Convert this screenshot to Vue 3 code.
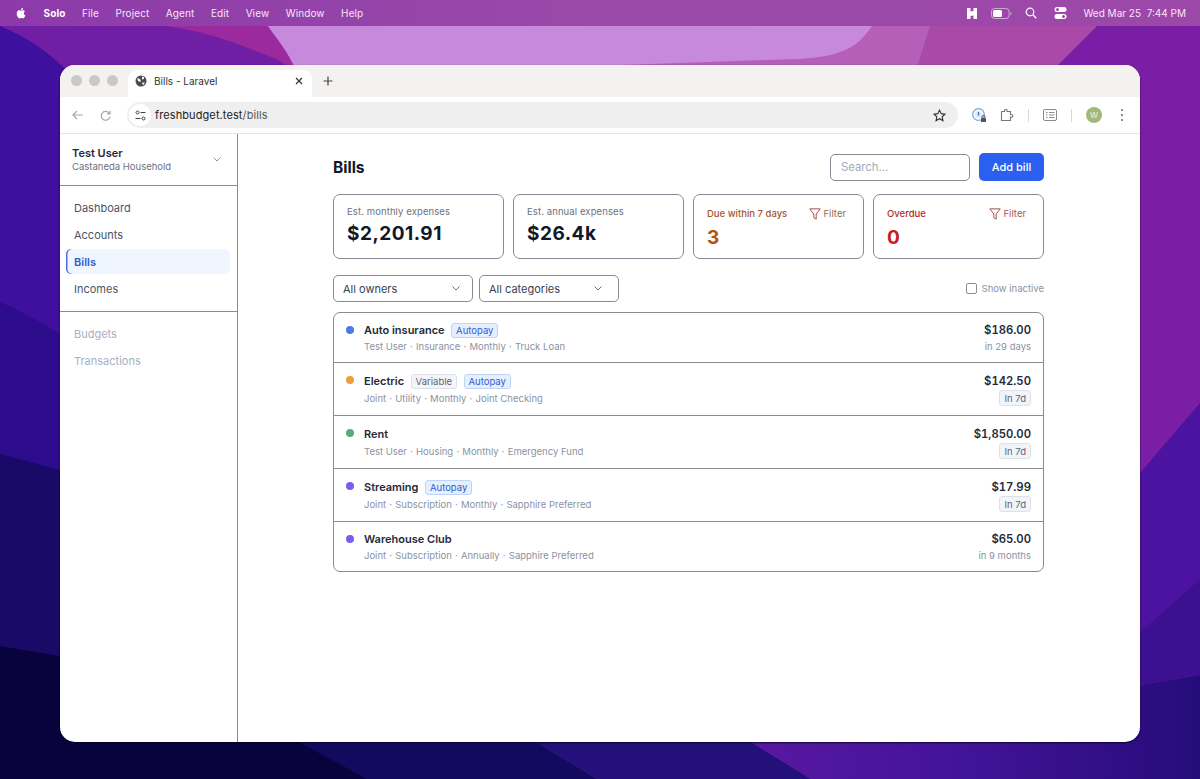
<script setup>
const stats = [
  { label: 'Est. monthly expenses', value: '$2,201.91' },
  { label: 'Est. annual expenses', value: '$26.4k' },
  { label: 'Due within 7 days', value: '3', tone: 'due', filter: true },
  { label: 'Overdue', value: '0', tone: 'over', filter: true },
]

const bills = [
  { name: 'Auto insurance', color: '#4a7be8', tags: ['Autopay'], meta: ['Test User', 'Insurance', 'Monthly', 'Truck Loan'], amount: '$186.00', when: 'in 29 days', h: 50 },
  { name: 'Electric', color: '#e9a23b', tags: ['Variable', 'Autopay'], meta: ['Joint', 'Utility', 'Monthly', 'Joint Checking'], amount: '$142.50', badge: 'In 7d', h: 53 },
  { name: 'Rent', color: '#4fae7f', tags: [], meta: ['Test User', 'Housing', 'Monthly', 'Emergency Fund'], amount: '$1,850.00', badge: 'In 7d', h: 53 },
  { name: 'Streaming', color: '#7c5ce8', tags: ['Autopay'], meta: ['Joint', 'Subscription', 'Monthly', 'Sapphire Preferred'], amount: '$17.99', badge: 'In 7d', h: 53 },
  { name: 'Warehouse Club', color: '#7c5ce8', tags: [], meta: ['Joint', 'Subscription', 'Annually', 'Sapphire Preferred'], amount: '$65.00', when: 'in 9 months', h: 49 },
]

const menus = ['File', 'Project', 'Agent', 'Edit', 'View', 'Window', 'Help']
const nav = ['Dashboard', 'Accounts', 'Bills', 'Incomes']
</script>

<template>
  <div class="desktop">
    <svg class="wallpaper" viewBox="0 0 1200 779">
      <defs>
        <linearGradient id="glow" x1="0" y1="0" x2="1" y2="0">
          <stop offset="0" stop-color="#5a18a2" />
          <stop offset="0.45" stop-color="#44149a" />
          <stop offset="1" stop-color="#260c7a" />
        </linearGradient>
      </defs>
      <rect width="1200" height="779" fill="#7a1fa5" />
      <path d="M165 26C205 34 260 45 292 70H0V26Z" fill="#701fa5" />
      <path d="M0 26C25 36 45 50 60 64L90 90V779H0Z" fill="#3f0f9e" />
      <path d="M0 302C20 310 40 322 60 334L90 350V779H0Z" fill="#2d0c8c" />
      <path d="M0 454L60 470L90 480V779H0Z" fill="#1a0a68" />
      <path d="M0 646L60 656L90 660V779H0Z" fill="#08033c" />
      <path d="M60 700H300L367 779H60Z" fill="#08033c" />
      <path d="M280 732L367 779H597L520 732Z" fill="#120a5e" />
      <path d="M520 732L597 779H811L735 732Z" fill="#24107a" />
      <path d="M735 732L811 779H1200V675L1110 690V732Z" fill="url(#glow)" />
      <path d="M1110 500L1140 473L1200 403V579L1140 632L1110 660Z" fill="#4c12a0" />
      <path d="M1110 660L1140 632L1200 579V675L1140 685L1110 690Z" fill="#3c1090" />
      <path d="M165 26C200 30 235 42 258 52C270 56 285 62 292 70H300V26Z" fill="#9c2a9f" />
      <path d="M268 26H1097L1053 70H296C288 52 278 40 268 26Z" fill="#a94aa8" />
      <path d="M268 26H930L916 70H296C288 52 278 40 268 26Z" fill="#b65fb8" />
      <path d="M268 26H872C858 46 845 56 800 59C700 62 600 66 500 70H296C288 52 278 40 268 26Z" fill="#c689dc" />
    </svg>

    <header class="menubar">
      <svg class="apple" viewBox="0 0 14 16" width="12" height="14"><path fill="#fff" d="M10.3 8.4c0-1.5 1.2-2.2 1.3-2.3-.7-1-1.8-1.2-2.2-1.2-.9-.1-1.8.6-2.3.6s-1.200-.6-2-.6C4 4.900 3 5.500 2.500 6.400 1.400 8.300 2.200 11.100 3.300 12.700c.5.800 1.200 1.600 2 1.600s1.100-.5 2-.5 1.200.5 2 .5 1.400-.8 1.900-1.600c.6-.9.900-1.800.9-1.800s-1.800-.7-1.800-2.500zM8.800 3.800c.4-.5.700-1.200.6-1.900-.6 0-1.300.4-1.800.9-.4.4-.7 1.200-.6 1.800.7.100 1.400-.3 1.800-.8z" /></svg>
      <b>Solo</b>
      <span v-for="m in menus" :key="m">{{ m }}</span>
      <div class="tray">
        <svg width="12" height="13" viewBox="0 0 12 13"><path fill="#fff" d="M1 1h3.500v3.500L7.500 4V1H11v11H7.500V8.500L4.500 9v3H1z" /></svg>
        <svg class="battery" width="21" height="11" viewBox="0 0 21 11"><rect x=".5" y=".5" width="17.500" height="10" rx="3" fill="none" stroke="#e6cfe8" stroke-opacity=".7" /><rect x="2" y="2" width="9" height="7" rx="1.500" fill="#fff" /><path d="M19.500 3.500c1 .5 1 3.500 0 4z" fill="#e6cfe8" /></svg>
        <svg width="12" height="12" viewBox="0 0 12 12"><circle cx="5" cy="5" r="3.800" fill="none" stroke="#fff" stroke-width="1.200" /><path d="M8 8l3.300 3.300" stroke="#fff" stroke-width="1.300" /></svg>
        <svg class="controls" width="13" height="12" viewBox="0 0 13 12"><rect x=".5" y="0" width="12" height="5" rx="2.500" fill="#fff" /><rect x=".5" y="7" width="12" height="5" rx="2.500" fill="#fff" /><circle cx="3.500" cy="2.500" r="1.500" fill="#9a4aa8" /><circle cx="9.500" cy="9.500" r="1.500" fill="#9a4aa8" /></svg>
        <span class="clock">Wed Mar 25&nbsp; 7:44 PM</span>
      </div>
    </header>

    <div class="window">
      <div class="tabstrip">
        <div class="lights"><i></i><i></i><i></i></div>
        <div class="tab">
          <svg width="12" height="12" viewBox="0 0 12 12"><circle cx="6" cy="6" r="5.500" fill="#4a4a4c" /><path d="M2 3l3 1 1 2-1 1-2-1zM7 1.500l2 .5 0 2-2 .5zM7 7.500l3 0-2 3z" fill="#f2f2f2" /></svg>
          <span>Bills - Laravel</span>
          <svg class="tab-x" width="8" height="8" viewBox="0 0 8 8"><path d="M1 1l6 6M7 1l-6 6" stroke="#333" stroke-width="1.200" /></svg>
        </div>
        <svg class="plus" width="10" height="10" viewBox="0 0 10 10"><path d="M5 .5v9M.5 5h9" stroke="#444" stroke-width="1.200" /></svg>
      </div>

      <div class="toolbar">
        <svg width="12" height="10" viewBox="0 0 12 10"><path d="M11 5H1.500M5 1L1 5l4 4" fill="none" stroke="#a8a8a8" stroke-width="1.200" /></svg>
        <svg width="11" height="11" viewBox="0 0 11 11"><path d="M9.600 3.800A4.400 4.400 0 1 0 10 6.500M10 .8v3.200H6.800" fill="none" stroke="#a8a8a8" stroke-width="1.200" /></svg>
        <div class="omnibox">
          <span class="site">
            <svg width="11" height="11" viewBox="0 0 11 11"><circle cx="2.500" cy="2.500" r="1.500" fill="none" stroke="#444" /><path d="M5.500 2.500H10.500M.5 8.500H5.500" stroke="#444" /><circle cx="8.500" cy="8.500" r="1.500" fill="none" stroke="#444" /></svg>
          </span>
          <span class="url">freshbudget.test<em>/bills</em></span>
          <svg class="star" width="13" height="13" viewBox="0 0 14 14"><path d="M7 1.200l1.800 3.800 4.100.5-3 2.900.8 4.100L7 10.500l-3.700 2 .8-4.100-3-2.900 4.100-.5z" fill="none" stroke="#333" stroke-width="1.200" /></svg>
        </div>
        <div class="actions">
          <svg width="14" height="15" viewBox="0 0 14 15"><circle cx="6.500" cy="6.500" r="5.800" fill="none" stroke="#7ea6dc" stroke-width="1.300" /><circle cx="6.500" cy="6.500" r="3.500" fill="#dce8f6" /><path d="M6.500 4v3.500" stroke="#3d6db5" stroke-width="1.200" /><rect x="9" y="10" width="5" height="4" rx=".5" fill="#555" /><path d="M10 10V8.800a1.500 1.500 0 0 1 3 0V10" fill="none" stroke="#555" /></svg>
          <svg width="14" height="14" viewBox="0 0 14 14"><path d="M1.500 3.500h3v-1a1.300 1.300 0 0 1 2.600 0v1h3.400v3h1a1.300 1.300 0 0 1 0 2.600h-1v3.400h-9v-3.400" fill="none" stroke="#777" stroke-width="1.100" /><path d="M1.500 9V3.500" stroke="#777" stroke-width="1.100" /></svg>
          <i class="sep"></i>
          <svg width="14" height="12" viewBox="0 0 14 12"><rect x=".5" y=".5" width="13" height="11" rx="1.500" fill="none" stroke="#8a8a8a" /><path d="M3 3.500h1.500M3 6h1.500M3 8.500h1.500M6 3.500h5.500M6 6h5.500M6 8.500h5.500" stroke="#8a8a8a" /></svg>
          <i class="sep"></i>
          <span class="avatar">W</span>
          <span class="dots"><i></i><i></i><i></i></span>
        </div>
      </div>

      <div class="app">
        <aside class="sidebar">
          <div class="account">
            <div>
              <div class="acc-name">Test User</div>
              <div class="acc-house">Castaneda Household</div>
            </div>
            <svg width="8" height="5" viewBox="0 0 8 5"><path d="M.5.500L4 4l3.500-3.500" fill="none" stroke="#8a93a3" /></svg>
          </div>
          <nav class="nav">
            <a v-for="n in nav" :key="n" :class="{ active: n === 'Bills' }">{{ n }}</a>
          </nav>
          <nav class="nav nav-off">
            <a>Budgets</a>
            <a>Transactions</a>
          </nav>
        </aside>

        <main class="main">
          <div class="head">
            <h1>Bills</h1>
            <div class="head-right">
              <div class="search">Search...</div>
              <button class="add">Add bill</button>
            </div>
          </div>

          <div class="stats">
            <div v-for="s in stats" :key="s.label" class="stat" :class="s.tone">
              <div class="stat-top">
                <span class="stat-label">{{ s.label }}</span>
                <span v-if="s.filter" class="filter">
                  <svg width="12" height="12" viewBox="0 0 11 11"><path d="M.7.800h9.600L6.600 5.500v4.700L4.400 9V5.500z" fill="none" stroke="currentColor" stroke-width=".9" stroke-linejoin="round" /></svg>
                  Filter
                </span>
              </div>
              <div class="stat-value">{{ s.value }}</div>
            </div>
          </div>

          <div class="filters">
            <div class="select own">All owners<svg width="8" height="5" viewBox="0 0 8 5"><path d="M.5.500L4 4l3.500-3.500" fill="none" stroke="#6b7280" /></svg></div>
            <div class="select cat">All categories<svg width="8" height="5" viewBox="0 0 8 5"><path d="M.5.500L4 4l3.500-3.500" fill="none" stroke="#6b7280" /></svg></div>
            <label class="inactive"><i></i>Show inactive</label>
          </div>

          <div class="list">
            <div v-for="b in bills" :key="b.name" class="row" :class="{ tall: b.badge }" :style="{ height: b.h + 'px' }">
              <span class="dot" :style="{ background: b.color }"></span>
              <div class="row-body">
                <div class="row-title">
                  <span class="row-name">{{ b.name }}</span>
                  <span v-for="t in b.tags" :key="t" class="tag" :class="t.toLowerCase()">{{ t }}</span>
                </div>
                <div class="row-meta">
                  <template v-for="(m, i) in b.meta" :key="m"><span v-if="i" class="mid">·</span>{{ m }}</template>
                </div>
              </div>
              <div class="row-end">
                <div class="amount">{{ b.amount }}</div>
                <span v-if="b.badge" class="in">{{ b.badge }}</span>
                <span v-else class="when">{{ b.when }}</span>
              </div>
            </div>
          </div>
        </main>
      </div>
    </div>
  </div>
</template>

<style>
html, body { margin: 0; background: #2a1080; }
</style>

<style scoped>
.desktop {
  position: relative;
  width: 1200px;
  height: 779px;
  overflow: hidden;
  font-family: Inter, "Liberation Sans", sans-serif;
  color: #111827;
}
.wallpaper { position: absolute; inset: 0; width: 1200px; height: 779px; }

.menubar {
  position: relative;
  height: 26px;
  display: flex;
  align-items: center;
  gap: 16.500px;
  padding: 0 14px 0 15px;
  background: linear-gradient(90deg, #8c3aaa, #9a4aa8 50%, #9c48a8);
  color: #f6e6f6;
  font-size: 10px;
  letter-spacing: .1px;
}
.menubar b { color: #fff; font-weight: 700; }
.tray { margin-left: auto; display: flex; align-items: center; gap: 13px; }
.controls { margin-left: 4px; }
.clock { margin-left: 4px; letter-spacing: 0; }

.window {
  position: relative;
  margin: 39px 0 0 60px;
  width: 1080px;
  height: 677px;
  background: #fff;
  border-radius: 15px;
  overflow: hidden;
  display: flex;
  flex-direction: column;
  box-shadow: 0 1px 2px rgba(5, 0, 30, .8);
}

.tabstrip {
  height: 32px;
  flex: none;
  background: #f3f2f1;
  display: flex;
  align-items: flex-end;
}
.lights { display: flex; gap: 7px; padding: 0 10px 11px 11px; }
.lights i { width: 11px; height: 11px; border-radius: 50%; background: #c9c9c9; }
.tab {
  width: 184px;
  height: 27px;
  background: #fff;
  border-radius: 9px 9px 0 0;
  display: flex;
  align-items: center;
  gap: 7px;
  padding: 0 9px 5px 7px;
  box-sizing: border-box;
  font-size: 10px;
  color: #333;
}
.tab-x { margin-left: auto; }
.plus { margin: 0 0 11px 11px; }

.toolbar {
  height: 37px;
  flex: none;
  box-sizing: border-box;
  border-bottom: 1px solid #e4e4e4;
  display: flex;
  align-items: center;
  padding-left: 12px;
  gap: 16px;
}
.omnibox {
  width: 831px;
  height: 26px;
  border-radius: 13px;
  background: #efefef;
  display: flex;
  align-items: center;
  flex: none;
}
.site {
  width: 22px;
  height: 22px;
  margin-left: 2px;
  border-radius: 50%;
  background: #fff;
  display: flex;
  align-items: center;
  justify-content: center;
}
.url { margin-left: 4px; font-size: 11px; color: #222; letter-spacing: .1px; }
.url em { font-style: normal; color: #555; }
.star { margin-left: auto; margin-right: 12px; }
.actions { display: flex; align-items: center; gap: 14px; margin-left: -2px; }
.sep { width: 1px; height: 13px; background: #d8d8d8; }
.avatar {
  width: 16px;
  height: 16px;
  border-radius: 50%;
  background: #a3b97a;
  color: #f1f5e8;
  font-size: 8px;
  display: flex;
  align-items: center;
  justify-content: center;
}
.dots { display: flex; flex-direction: column; gap: 3px; margin-left: 5px; }
.dots i { width: 2px; height: 2px; border-radius: 50%; background: #666; }

.app { flex: 1; display: flex; min-height: 0; }

.sidebar {
  width: 178px;
  flex: none;
  box-sizing: border-box;
  border-right: 1px solid #868b96;
}
.account {
  height: 52px;
  box-sizing: border-box;
  border-bottom: 1px solid #868b96;
  padding: 13px 16px 0 12px;
  display: flex;
  align-items: flex-start;
  justify-content: space-between;
}
.account svg { margin-top: 10px; }
.acc-name { font-size: 11px; font-weight: 600; color: #1f2937; line-height: 13px; }
.acc-house { font-size: 9.500px; color: #6b7280; line-height: 14px; }

.nav {
  display: flex;
  flex-direction: column;
  gap: 2px;
  padding: 9px 7px 10px 6px;
  border-bottom: 1px solid #868b96;
}
.nav a {
  height: 25px;
  display: flex;
  align-items: center;
  padding-left: 8px;
  border-radius: 5px;
  font-size: 11px;
  color: #4b5563;
}
.nav a.active {
  background: #eff6ff;
  color: #2f5ccf;
  font-weight: 600;
  box-shadow: inset 1.500px 0 0 #4a74dc;
}
.nav-off { border-bottom: 0; padding-top: 9px; }
.nav-off a { color: #a7b0bf; }

.main {
  flex: 1;
  padding: 19px 96px 0 95px;
  min-width: 0;
}
.head { display: flex; justify-content: space-between; align-items: center; height: 28px; }
h1 { margin: 1px 0 0; font-size: 15.500px; font-weight: 700; color: #111827; }
.head-right { display: flex; gap: 9px; align-items: center; }
.search {
  width: 128px;
  height: 25px;
  border: 1px solid #868b96;
  border-radius: 5px;
  padding-left: 10px;
  line-height: 25px;
  font-size: 11.300px;
  color: #a2abb9;
}
.add {
  width: 65px;
  height: 28px;
  border: 0;
  border-radius: 5px;
  background: #2b5fef;
  color: #fff;
  font: 500 11px Inter, "Liberation Sans", sans-serif;
}

.stats {
  display: grid;
  grid-template-columns: repeat(4, 171px);
  gap: 9px;
  margin-top: 13px;
}
.stat {
  height: 65px;
  box-sizing: border-box;
  border: 1px solid #868b96;
  border-radius: 7px;
  padding: 10px 13px 0;
}
.stat-top { display: flex; justify-content: space-between; align-items: center; height: 13px; }
.stat-label { font-size: 9.500px; color: #6b7280; letter-spacing: .1px; }
.stat-value { margin-top: 4px; font-size: 19px; font-weight: 700; line-height: 24px; letter-spacing: .5px; }
.filter { display: flex; align-items: center; gap: 3px; font-size: 9.500px; margin-right: 4px; }
.due .filter { color: #8f6a52; }
.over .filter { color: #a05a5a; }
.filter svg { color: #a0504a; }
.due .stat-top, .over .stat-top { margin-top: 2px; }
.due .stat-label { color: #a5562e; font-weight: 500; letter-spacing: 0; }
.over .stat-label { color: #b02a2a; font-weight: 500; letter-spacing: 0; }
.due .stat-value { color: #b4530f; margin-top: 6px; }
.over .stat-value { color: #c81e1e; margin-top: 6px; }

.filters { display: flex; align-items: center; gap: 6px; margin-top: 16px; }
.select {
  width: 140px;
  height: 27px;
  box-sizing: border-box;
  border: 1px solid #868b96;
  border-radius: 5px;
  padding: 0 9px;
  display: flex;
  align-items: center;
  justify-content: space-between;
  font-size: 11px;
  color: #374151;
}
.select svg { margin-right: 3px; }
.cat svg { margin-right: 7px; }
.inactive {
  margin-left: auto;
  display: flex;
  align-items: center;
  gap: 5px;
  font-size: 9.500px;
  color: #8a93a3;
}
.inactive i {
  width: 11px;
  height: 11px;
  box-sizing: border-box;
  border: 1px solid #8a8f98;
  border-radius: 2px;
}

.list {
  margin-top: 10px;
  border: 1px solid #868b96;
  border-radius: 7px;
  overflow: hidden;
}
.row {
  box-sizing: border-box;
  display: flex;
  padding: 9px 12px 0 12px;
  border-bottom: 1px solid #868b96;
}
.row.tall { padding-top: 10px; }
.row:last-child { border-bottom: 0; }
.dot { width: 8px; height: 8px; border-radius: 50%; margin-top: 4px; flex: none; }
.tall .dot { margin-top: 3px; }
.row-body { margin-left: 10px; flex: 1; }
.row-title { display: flex; align-items: center; gap: 6.500px; height: 16px; }
.row-name { font-size: 11px; font-weight: 600; color: #1f2937; }
.tag {
  height: 15px;
  box-sizing: border-box;
  padding: 0 4px;
  display: flex;
  align-items: center;
  border-radius: 3px;
  font-size: 9.500px;
}
.tag.autopay { background: #e6effd; border: 1px solid #bfd5f8; color: #2f5ccf; }
.tag.variable { background: #f3f5f9; border: 1px solid #dde2ea; color: #5b6472; }
.row-meta { margin-top: 1px; font-size: 9.500px; color: #8a93a3; line-height: 16px; }
.tall .row-meta { margin-top: 2px; }
.mid { margin: 0 3.200px; }
.row-end { display: flex; flex-direction: column; align-items: flex-end; }
.amount { font-size: 11.300px; font-weight: 600; color: #1f2937; line-height: 16px; font-variant-numeric: tabular-nums; }
.when { margin-top: 1px; font-size: 9.500px; color: #8a93a3; line-height: 16px; }
.in {
  margin-top: 1px;
  height: 16px;
  box-sizing: border-box;
  padding: 0 4px;
  display: flex;
  align-items: center;
  background: #f1f4f9;
  border: 1px solid #dde2ea;
  border-radius: 3px;
  font-size: 9.500px;
  color: #5b6472;
}
</style>
